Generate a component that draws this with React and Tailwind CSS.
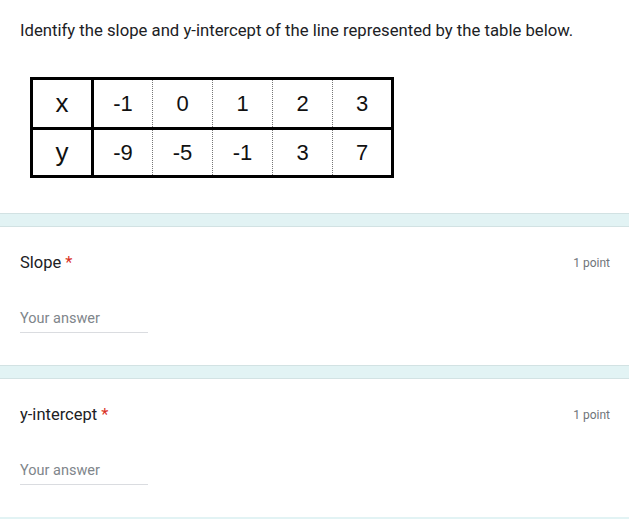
import React from "react";

const xs = ["-1", "0", "1", "2", "3"];
const ys = ["-9", "-5", "-1", "3", "7"];

const Divider = () => (
  <div className="h-[14px] bg-[#e2f3f4] border-y border-[#d2e2e3]" />
);

const Question = ({ title }) => {
  return (
    <div className="bg-white pl-5 pr-[19px] pt-[24px] pb-[32px]">
      <div className="flex items-center justify-between h-6">
        <div className="text-[16.5px] text-[#202124]">
          {title}
          <span className="text-[#d93025] ml-1">*</span>
        </div>
        <div className="text-[12px] text-[#70757a]">1 point</div>
      </div>
      <div className="mt-[34px] w-[128px] border-b border-[#dadce0] pb-[3px]">
        <div className="text-[14.5px] leading-5 text-[#80868b]">Your answer</div>
      </div>
    </div>
  );
};

const App = () => {
  return (
    <div className="w-[629px] min-h-[519px] bg-[#e2f3f4] font-['Roboto',sans-serif]">
      <div className="bg-white px-5 pt-[19px] pb-[35px]">
        <p className="text-[16.7px] leading-6 text-[#202124]">
          Identify the slope and y-intercept of the line represented by the table below.
        </p>
        <table className="mt-[34px] ml-[10px] border-collapse border-[3px] border-black font-['Liberation_Sans',sans-serif] text-[#111]">
          <tbody>
            <tr className="h-[50px] border-b-[3px] border-black">
              <td className="w-[61px] text-center text-[26px] border-r-[3px] border-black">x</td>
              {xs.map((v, i) => (
                <td
                  key={i}
                  className="w-[60px] text-center text-[22px] border-r border-dotted border-[#777]"
                >
                  {v}
                </td>
              ))}
            </tr>
            <tr className="h-[48px]">
              <td className="text-center text-[26px] border-r-[3px] border-black">y</td>
              {ys.map((v, i) => (
                <td
                  key={i}
                  className="text-center text-[22px] border-r border-dotted border-[#777]"
                >
                  {v}
                </td>
              ))}
            </tr>
          </tbody>
        </table>
      </div>
      <Divider />
      <Question title="Slope" />
      <Divider />
      <Question title="y-intercept" />
    </div>
  );
};

export default App;
